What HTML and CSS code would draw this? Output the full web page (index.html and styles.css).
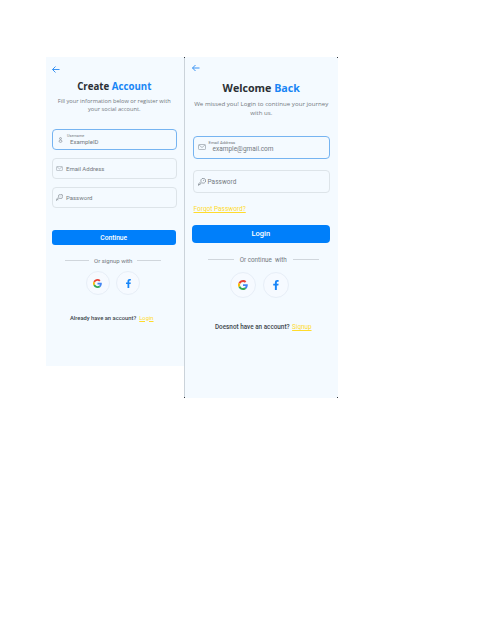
FILE: index.html
```html
<!DOCTYPE html>
<html lang="en">
<head>
<meta charset="utf-8">
<title>Sign up and login</title>
<link rel="stylesheet" href="styles.css">
</head>
<body>
<svg class="symbols" aria-hidden="true">
  <symbol id="arrow" viewBox="0 0 16 14"><path d="M15 7H1M7 1L1 7l6 6" fill="none" stroke="#2f8df2" stroke-width="1.9"/></symbol>
  <symbol id="mail" viewBox="0 0 16 12"><rect x="1" y="1" width="14" height="10" rx="1.5" fill="none" stroke="#929aa2" stroke-width="1.3"/><path d="M2 2l6 5 6-5" fill="none" stroke="#929aa2" stroke-width="1.3"/></symbol>
  <symbol id="key" viewBox="0 0 16 16"><path d="M7 9.500L2 14.500H1v-2.500L6 7A4.800 4.800 0 1 1 9 10zM3 12.500l1.500 1.500" fill="none" stroke="#7d858d" stroke-width="1.500"/><circle cx="11.300" cy="4.700" r="1" fill="#7d858d"/></symbol>
  <symbol id="user" viewBox="0 0 10 14"><circle cx="5" cy="3.500" r="2.200" fill="none" stroke="#7d858d" stroke-width="1.500"/><ellipse cx="5" cy="9.800" rx="3.400" ry="2.700" fill="none" stroke="#7d858d" stroke-width="1.500"/></symbol>
  <symbol id="google" viewBox="0 0 48 48"><path fill="#ea4335" d="M24 9.500c3.540 0 6.710 1.220 9.210 3.600l6.850-6.850C35.900 2.380 30.470 0 24 0 14.620 0 6.510 5.380 2.560 13.220l7.980 6.190C12.430 13.720 17.740 9.500 24 9.500z"/><path fill="#4285f4" d="M46.980 24.550c0-1.570-.15-3.090-.38-4.550H24v9.020h12.940c-.58 2.960-2.260 5.480-4.780 7.180l7.730 6c4.510-4.180 7.090-10.360 7.090-17.650z"/><path fill="#fbbc05" d="M10.530 28.590a14.500 14.500 0 0 1 0-9.180l-7.980-6.190a24 24 0 0 0 0 21.560l7.980-6.190z"/><path fill="#34a853" d="M24 48c6.480 0 11.930-2.130 15.890-5.810l-7.730-6c-2.150 1.450-4.920 2.300-8.160 2.300-6.260 0-11.570-4.220-13.470-9.910l-7.980 6.190C6.510 42.620 14.620 48 24 48z"/></symbol>
  <symbol id="facebook" viewBox="0 0 10 18"><path fill="#1685f8" d="M3 18v-8H0V6.800h3V4.500C3 1.500 4.700 0 7.300 0c1.200 0 2.400.2 2.400.2V3H8.300C7 3 6.500 3.800 6.500 4.700v2.100h3.200L9.200 10H6.500v8z"/></symbol>
</svg>
<main class="screens">
  <section class="screen signup">
    <svg class="back"><use href="#arrow"/></svg>
    <h1>Create <b>Account</b></h1>
    <p class="intro">Fill your information below or register with<br>your social account.</p>
    <div class="field active">
      <svg class="ico user"><use href="#user"/></svg>
      <div class="entry"><small>Username</small><span class="value">ExampleID</span></div>
    </div>
    <div class="field"><svg class="ico mail"><use href="#mail"/></svg><span class="hint">Email Address</span></div>
    <div class="field"><svg class="ico key"><use href="#key"/></svg><span class="hint">Password</span></div>
    <div class="button">Continue</div>
    <div class="divider"><i></i><span>Or signup with</span><i></i></div>
    <div class="social"><div class="circle"><svg class="g"><use href="#google"/></svg></div><div class="circle"><svg class="f"><use href="#facebook"/></svg></div></div>
    <p class="switch"><span>Already have an account?</span><a>Login</a></p>
  </section>
  <section class="screen login">
    <svg class="back"><use href="#arrow"/></svg>
    <h1>Welcome <b>Back</b></h1>
    <p class="intro">We missed you! Login to continue your journey<br>with us.</p>
    <div class="field active">
      <svg class="ico mail"><use href="#mail"/></svg>
      <div class="entry"><small>Email Address</small><span class="value">example@gmail.com</span></div>
    </div>
    <div class="field"><svg class="ico key"><use href="#key"/></svg><span class="hint">Password</span></div>
    <div class="forgot"><a>Forgot Password?</a></div>
    <div class="button">Login</div>
    <div class="divider"><i></i><span>Or continue &nbsp;with</span><i></i></div>
    <div class="social"><div class="circle"><svg class="g"><use href="#google"/></svg></div><div class="circle"><svg class="f"><use href="#facebook"/></svg></div></div>
    <p class="switch"><span>Doesnot have an account?</span><a>Signup</a></p>
  </section>
</main>
</body>
</html>
```
FILE: styles.css
```css
* { box-sizing: border-box; }
body { margin: 0; background: #fff; font-family: Roboto, "Liberation Sans", sans-serif; color: #737980; }
.symbols { display: none; }
.screens { display: flex; align-items: flex-start; padding: 57px 0 0 46px; }
.screen { display: flex; flex-direction: column; background: #f4faff; white-space: nowrap; }
.signup { width: 138px; height: 309px; padding: 9px 7.500px 0 6px; }
.login {
  width: 154px; height: 341px; padding: 7px 8px 0 8.500px;
  background:
    linear-gradient(#30353a, #30353a) left top / 1px 1px no-repeat,
    linear-gradient(#30353a, #30353a) right top / 1px 1px no-repeat,
    linear-gradient(#30353a, #30353a) left bottom / 1px 1px no-repeat,
    linear-gradient(#30353a, #30353a) right bottom / 1px 1px no-repeat,
    linear-gradient(#cbd3da, #cbd3da) left top / 1px 100% no-repeat,
    #f4faff;
}
svg { display: block; flex: none; }
.back { width: 8px; height: 7px; }
.login .back { height: 8px; margin-left: -1px; }
h1 { margin: 7px 0 0; height: 14px; font: 700 9.700px/14px "Open Sans", sans-serif; color: #2b3035; text-align: center; }
h1 b { color: #1985f5; font-weight: 700; }
.login h1 { margin-top: 9px; height: 15px; font-size: 10.700px; line-height: 15px; }
.intro { margin: 3px 0 0; height: 16px; font: 5.700px/8px "Open Sans", sans-serif; text-align: center; }
.login .intro { margin: 4px -4px 0; height: 17px; font-size: 6.150px; line-height: 8.500px; }
.field { display: flex; align-items: center; height: 21px; margin-top: 8px; padding-left: 3px; border: 1px solid #dde4e9; border-radius: 4px; }
.field.active { margin-top: 16px; border-color: #76b4f1; }
.login .field { height: 23px; margin-top: 11px; padding-left: 4px; }
.login .field.active { margin-top: 19px; padding-bottom: 2px; }
.ico { margin-right: 4px; }
.ico.mail { width: 7px; height: 5px; margin-right: 3px; }
.ico.key { width: 7px; height: 7px; margin-right: 3px; }
.ico.user { width: 5px; height: 6px; margin: 0 4px 0 2px; }
.login .ico.mail { width: 8px; height: 6px; margin-right: 3px; }
.login .ico.key { width: 8px; height: 8px; margin-right: 2px; }
.hint { font-size: 6px; }
.login .hint { font-size: 6.400px; letter-spacing: .08px; }
.entry { display: flex; flex-direction: column; }
.signup .entry { padding-bottom: 2px; }
.entry small { font-size: 3.800px; line-height: 5px; }
.value { padding-left: 3px; font-size: 6px; line-height: 7px; }
.login .entry small { font-size: 4.200px; line-height: 5px; }
.login .value { padding-left: 4px; font-size: 6.500px; line-height: 8px; }
.forgot { height: 9px; margin: 12px 0 0 1px; font-size: 6.500px; line-height: 9px; }
a { color: #ffdb2c; text-decoration: underline; text-decoration-thickness: .5px; }
.button { height: 15.500px; margin: 21.500px 1px 0 0; border-radius: 3px; background: #007ffa; color: #fff; font-weight: 500; font-size: 6.700px; line-height: 16px; text-align: center; }
.login .button { height: 18px; margin: 11px .5px 0 -.5px; border-radius: 4px; font-size: 7.500px; line-height: 18px; }
.divider { display: flex; justify-content: center; align-items: center; gap: 5px; height: 8px; margin-top: 11px; padding-right: 2px; font-size: 6px; }
.divider i { width: 24px; height: 1px; background: #d0d6dc; }
.login .divider { margin-top: 12.500px; gap: 6px; padding: 0 0 0 4px; font-size: 6.300px; }
.login .divider i { width: 26px; }
.social { display: flex; justify-content: center; gap: 6.500px; margin-top: 7px; padding-right: 3px; }
.circle { display: flex; justify-content: center; align-items: center; width: 24px; height: 24px; border: 1px solid #e7eef7; border-radius: 50%; background: #f6faff; }
.g { width: 9px; height: 9px; }
.f { width: 5px; height: 9px; }
.login .social { margin-top: 8px; gap: 7px; padding-right: 3px; }
.login .circle { width: 26px; height: 26px; }
.login .g { width: 10px; height: 10px; }
.login .f { width: 6px; height: 10px; }
.switch { display: flex; justify-content: center; gap: 3px; height: 8px; margin: 18.500px 5px 0 0; font-size: 5.800px; line-height: 8px; color: #40464c; font-weight: 500; }
.switch a { font-weight: 400; }
.login .switch { margin: 25.500px 0 0 4px; gap: 2.500px; font-size: 6.350px; }
```
